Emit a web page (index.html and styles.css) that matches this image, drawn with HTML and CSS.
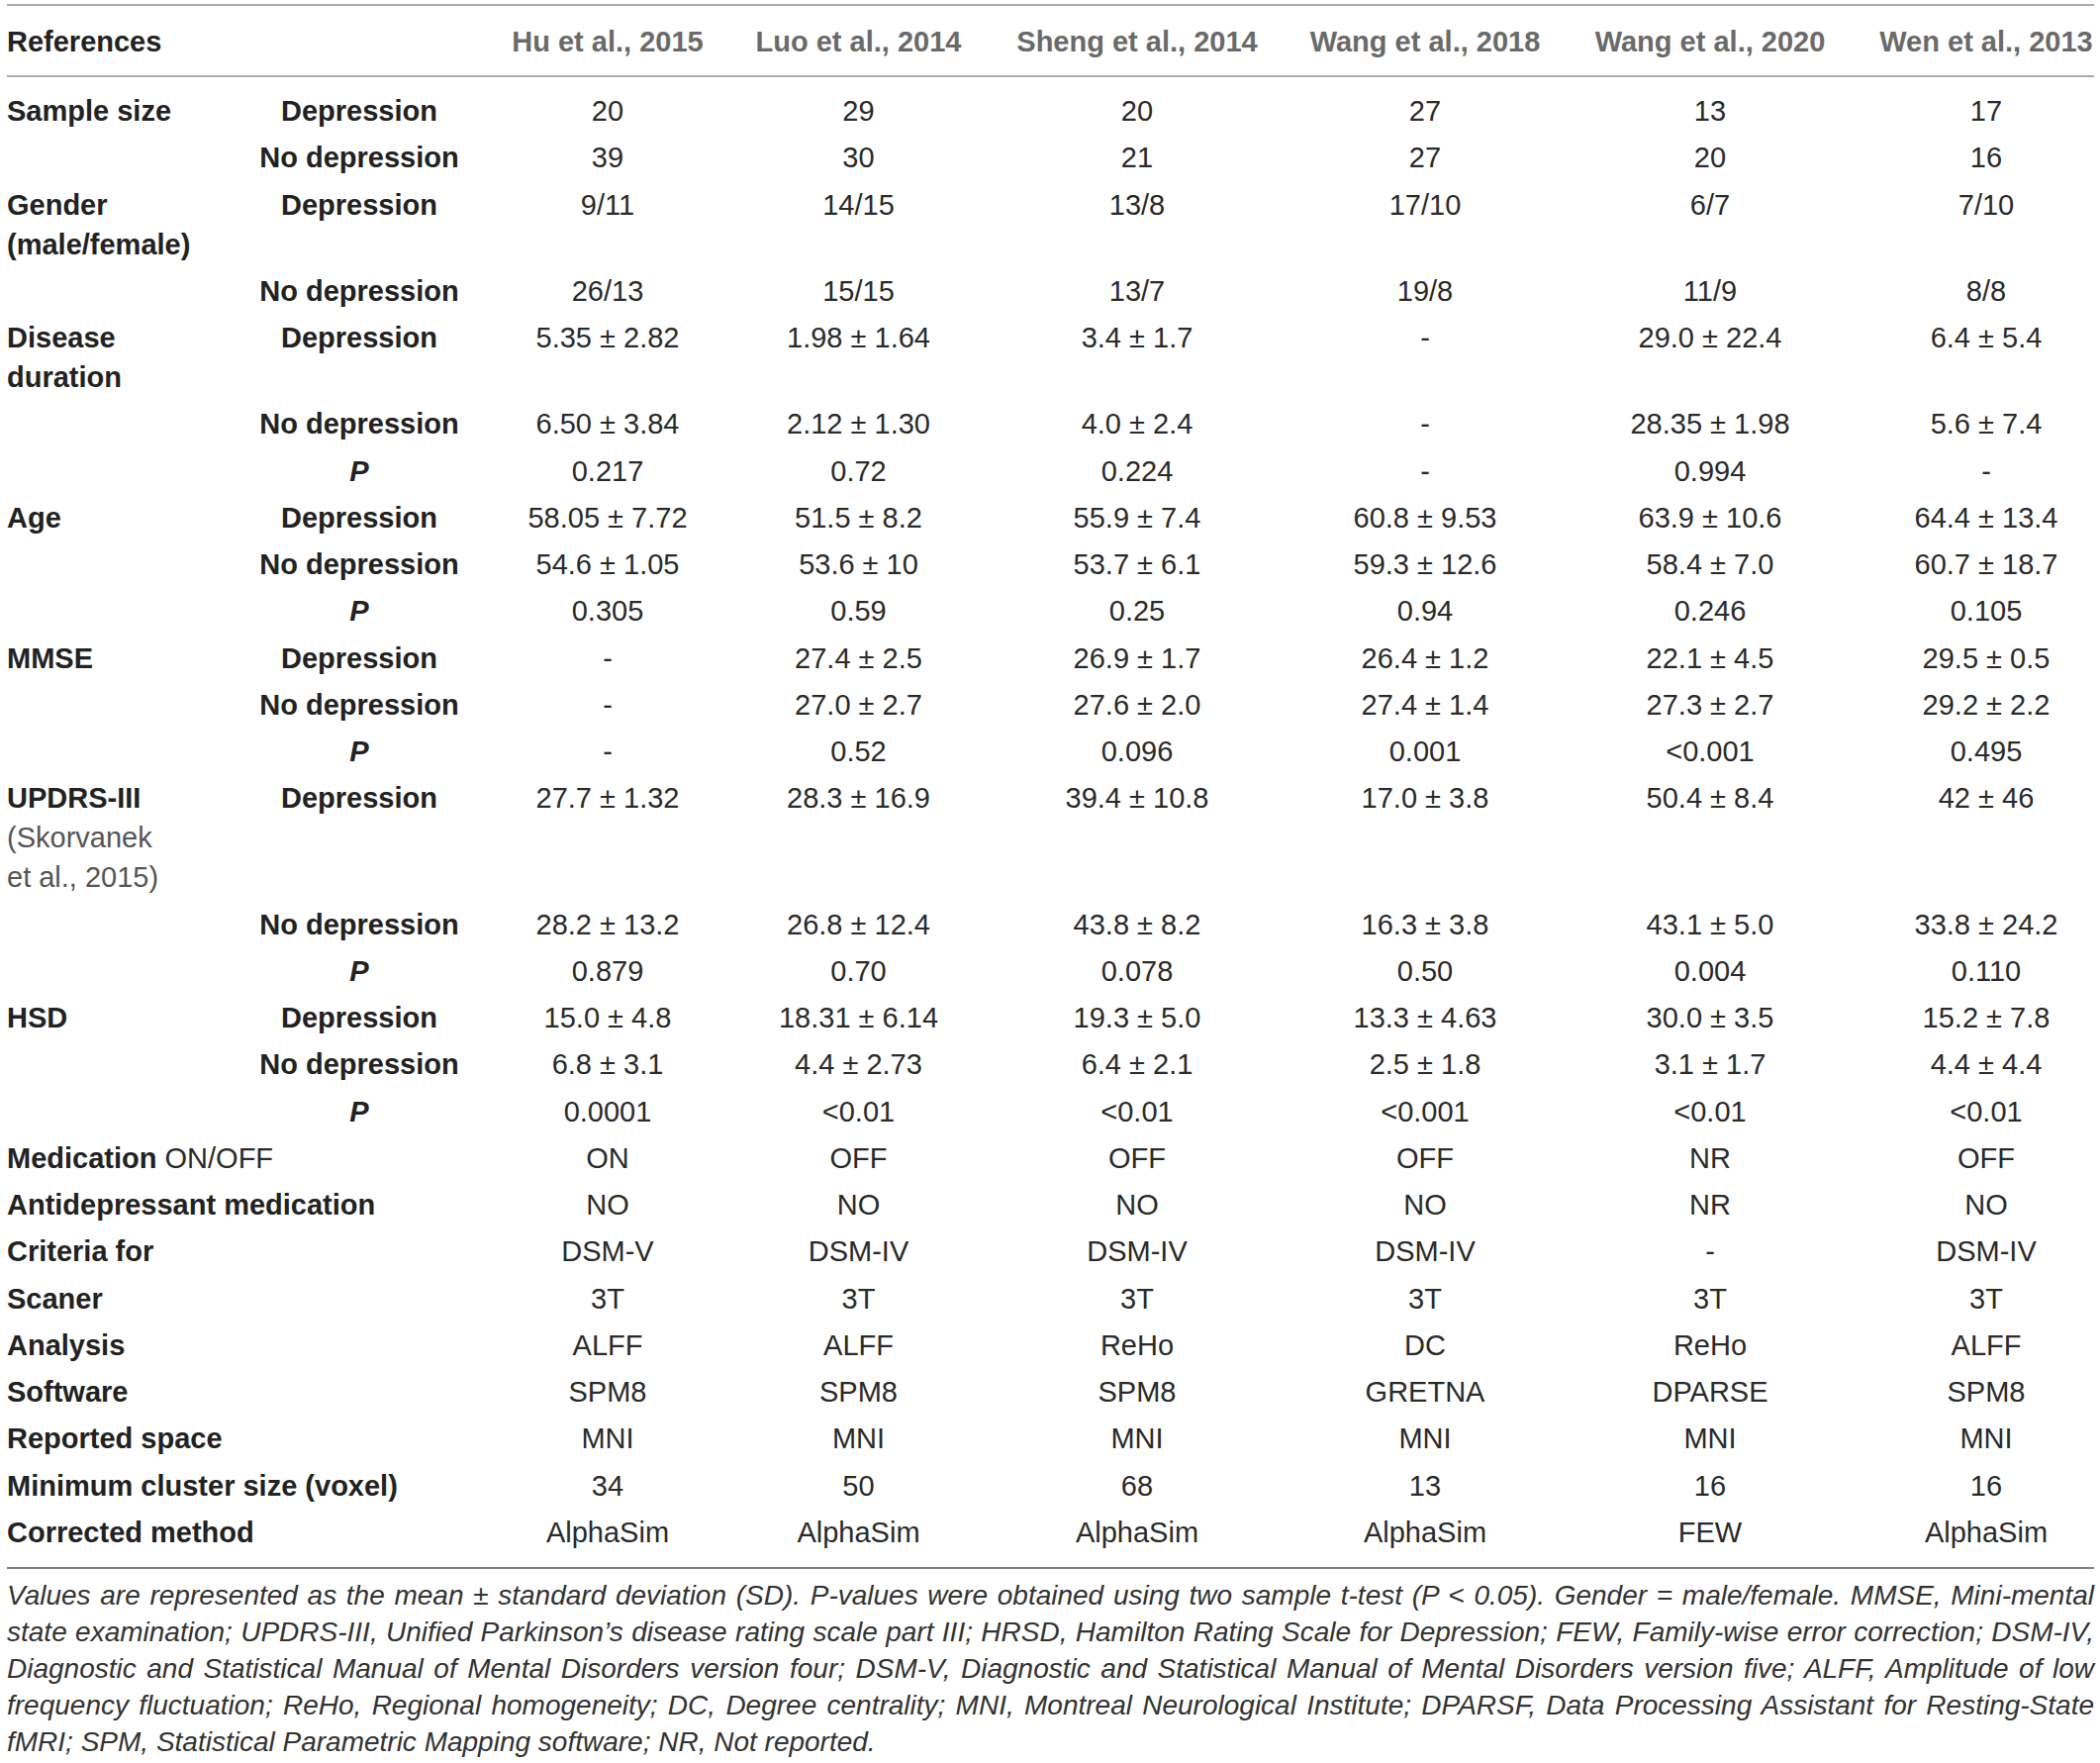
FILE: index.html
```html
<!DOCTYPE html>
<html lang="en">
<head>
<meta charset="UTF-8">
<meta name="viewport" content="width=device-width, initial-scale=1.0">
<title>Included studies</title>
<link rel="stylesheet" href="styles.css">
</head>
<body>

<div id="tableWrap">
  <table class="study-table">
    <colgroup>
      <col class="c-label">
      <col class="c-group">
      <col class="c-hu">
      <col class="c-luo">
      <col class="c-sheng">
      <col class="c-wang18">
      <col class="c-wang20">
      <col class="c-wen">
    </colgroup>
    <thead>
      <tr>
        <th class="lbl">References</th>
        <th></th>
        <th>Hu et al., 2015</th>
        <th>Luo et al., 2014</th>
        <th>Sheng et al., 2014</th>
        <th>Wang et al., 2018</th>
        <th>Wang et al., 2020</th>
        <th>Wen et al., 2013</th>
      </tr>
    </thead>
    <tbody>
      <tr>
        <td class="lbl">Sample size</td><td class="grp">Depression</td>
        <td>20</td><td>29</td><td>20</td><td>27</td><td>13</td><td>17</td>
      </tr>
      <tr>
        <td></td><td class="grp">No depression</td>
        <td>39</td><td>30</td><td>21</td><td>27</td><td>20</td><td>16</td>
      </tr>
      <tr>
        <td class="lbl">Gender (male/female)</td><td class="grp">Depression</td>
        <td>9/11</td><td>14/15</td><td>13/8</td><td>17/10</td><td>6/7</td><td>7/10</td>
      </tr>
      <tr>
        <td></td><td class="grp">No depression</td>
        <td>26/13</td><td>15/15</td><td>13/7</td><td>19/8</td><td>11/9</td><td>8/8</td>
      </tr>
      <tr>
        <td class="lbl">Disease duration</td><td class="grp">Depression</td>
        <td>5.35 ± 2.82</td><td>1.98 ± 1.64</td><td>3.4 ± 1.7</td><td>-</td><td>29.0 ± 22.4</td><td>6.4 ± 5.4</td>
      </tr>
      <tr>
        <td></td><td class="grp">No depression</td>
        <td>6.50 ± 3.84</td><td>2.12 ± 1.30</td><td>4.0 ± 2.4</td><td>-</td><td>28.35 ± 1.98</td><td>5.6 ± 7.4</td>
      </tr>
      <tr>
        <td></td><td class="grp pval">P</td>
        <td>0.217</td><td>0.72</td><td>0.224</td><td>-</td><td>0.994</td><td>-</td>
      </tr>
      <tr>
        <td class="lbl">Age</td><td class="grp">Depression</td>
        <td>58.05 ± 7.72</td><td>51.5 ± 8.2</td><td>55.9 ± 7.4</td><td>60.8 ± 9.53</td><td>63.9 ± 10.6</td><td>64.4 ± 13.4</td>
      </tr>
      <tr>
        <td></td><td class="grp">No depression</td>
        <td>54.6 ± 1.05</td><td>53.6 ± 10</td><td>53.7 ± 6.1</td><td>59.3 ± 12.6</td><td>58.4 ± 7.0</td><td>60.7 ± 18.7</td>
      </tr>
      <tr>
        <td></td><td class="grp pval">P</td>
        <td>0.305</td><td>0.59</td><td>0.25</td><td>0.94</td><td>0.246</td><td>0.105</td>
      </tr>
      <tr>
        <td class="lbl">MMSE</td><td class="grp">Depression</td>
        <td>-</td><td>27.4 ± 2.5</td><td>26.9 ± 1.7</td><td>26.4 ± 1.2</td><td>22.1 ± 4.5</td><td>29.5 ± 0.5</td>
      </tr>
      <tr>
        <td></td><td class="grp">No depression</td>
        <td>-</td><td>27.0 ± 2.7</td><td>27.6 ± 2.0</td><td>27.4 ± 1.4</td><td>27.3 ± 2.7</td><td>29.2 ± 2.2</td>
      </tr>
      <tr>
        <td></td><td class="grp pval">P</td>
        <td>-</td><td>0.52</td><td>0.096</td><td>0.001</td><td>&lt;0.001</td><td>0.495</td>
      </tr>
      <tr>
        <td class="lbl">UPDRS-III<br><span class="cite">(Skorvanek<br>et al., 2015)</span></td><td class="grp">Depression</td>
        <td>27.7 ± 1.32</td><td>28.3 ± 16.9</td><td>39.4 ± 10.8</td><td>17.0 ± 3.8</td><td>50.4 ± 8.4</td><td>42 ± 46</td>
      </tr>
      <tr>
        <td></td><td class="grp">No depression</td>
        <td>28.2 ± 13.2</td><td>26.8 ± 12.4</td><td>43.8 ± 8.2</td><td>16.3 ± 3.8</td><td>43.1 ± 5.0</td><td>33.8 ± 24.2</td>
      </tr>
      <tr>
        <td></td><td class="grp pval">P</td>
        <td>0.879</td><td>0.70</td><td>0.078</td><td>0.50</td><td>0.004</td><td>0.110</td>
      </tr>
      <tr>
        <td class="lbl">HSD</td><td class="grp">Depression</td>
        <td>15.0 ± 4.8</td><td>18.31 ± 6.14</td><td>19.3 ± 5.0</td><td>13.3 ± 4.63</td><td>30.0 ± 3.5</td><td>15.2 ± 7.8</td>
      </tr>
      <tr>
        <td></td><td class="grp">No depression</td>
        <td>6.8 ± 3.1</td><td>4.4 ± 2.73</td><td>6.4 ± 2.1</td><td>2.5 ± 1.8</td><td>3.1 ± 1.7</td><td>4.4 ± 4.4</td>
      </tr>
      <tr>
        <td></td><td class="grp pval">P</td>
        <td>0.0001</td><td>&lt;0.01</td><td>&lt;0.01</td><td>&lt;0.001</td><td>&lt;0.01</td><td>&lt;0.01</td>
      </tr>
      <tr>
        <td class="lbl" colspan="2">Medication <span class="cite">ON/OFF</span></td>
        <td>ON</td><td>OFF</td><td>OFF</td><td>OFF</td><td>NR</td><td>OFF</td>
      </tr>
      <tr>
        <td class="lbl" colspan="2">Antidepressant medication</td>
        <td>NO</td><td>NO</td><td>NO</td><td>NO</td><td>NR</td><td>NO</td>
      </tr>
      <tr>
        <td class="lbl" colspan="2">Criteria for</td>
        <td>DSM-V</td><td>DSM-IV</td><td>DSM-IV</td><td>DSM-IV</td><td>-</td><td>DSM-IV</td>
      </tr>
      <tr>
        <td class="lbl" colspan="2">Scaner</td>
        <td>3T</td><td>3T</td><td>3T</td><td>3T</td><td>3T</td><td>3T</td>
      </tr>
      <tr>
        <td class="lbl" colspan="2">Analysis</td>
        <td>ALFF</td><td>ALFF</td><td>ReHo</td><td>DC</td><td>ReHo</td><td>ALFF</td>
      </tr>
      <tr>
        <td class="lbl" colspan="2">Software</td>
        <td>SPM8</td><td>SPM8</td><td>SPM8</td><td>GRETNA</td><td>DPARSE</td><td>SPM8</td>
      </tr>
      <tr>
        <td class="lbl" colspan="2">Reported space</td>
        <td>MNI</td><td>MNI</td><td>MNI</td><td>MNI</td><td>MNI</td><td>MNI</td>
      </tr>
      <tr>
        <td class="lbl" colspan="2">Minimum cluster size (voxel)</td>
        <td>34</td><td>50</td><td>68</td><td>13</td><td>16</td><td>16</td>
      </tr>
      <tr>
        <td class="lbl" colspan="2">Corrected method</td>
        <td>AlphaSim</td><td>AlphaSim</td><td>AlphaSim</td><td>AlphaSim</td><td>FEW</td><td>AlphaSim</td>
      </tr>
    </tbody>
  </table>

  <p class="table-note">Values are represented as the mean ± standard deviation (SD). P-values were obtained using two sample t-test (P &lt; 0.05). Gender = male/female. MMSE, Mini-mental state examination; UPDRS-III, Unified Parkinson’s disease rating scale part III; HRSD, Hamilton Rating Scale for Depression; FEW, Family-wise error correction; DSM-IV, Diagnostic and Statistical Manual of Mental Disorders version four; DSM-V, Diagnostic and Statistical Manual of Mental Disorders version five; ALFF, Amplitude of low frequency fluctuation; ReHo, Regional homogeneity; DC, Degree centrality; MNI, Montreal Neurological Institute; DPARSF, Data Processing Assistant for Resting-State fMRI; SPM, Statistical Parametric Mapping software; NR, Not reported.</p>
</div>

</body>
</html>
```

FILE: styles.css
```css
body {
  font-family: "Liberation Sans", Arial, sans-serif;
  background-color: #fff;
  color: #222;
  margin: 0;
  padding: 0;
}

#tableWrap {
  width: 2109px;
  margin-left: 7px;
  padding-top: 4px;
}

.study-table {
  width: 2109px;
  border-collapse: collapse;
  table-layout: fixed;
  font-size: 29px;
  line-height: 40px;
}

.c-label { width: 250px; }
.c-group { width: 212px; }
.c-hu { width: 290px; }
.c-luo { width: 217px; }
.c-sheng { width: 346px; }
.c-wang18 { width: 236px; }
.c-wang20 { width: 340px; }
.c-wen { width: 218px; }

thead tr {
  border-top: 2px solid #ababab;
  border-bottom: 2px solid #ababab;
}

th {
  padding: 16px 0 14px;
  font-weight: bold;
  color: #6a6a6a;
  text-align: center;
  white-space: nowrap;
}

th.lbl {
  color: #222;
  text-align: left;
}

td {
  padding: 3.63px 0;
  text-align: center;
  vertical-align: top;
  color: #2a2a2a;
  white-space: nowrap;
}

tbody tr:first-child td {
  padding-top: 14px;
}

tbody tr:last-child td {
  padding-bottom: 15px;
}

tbody tr:last-child {
  border-bottom: 2px solid #808080;
}

td.lbl {
  text-align: left;
  font-weight: bold;
  color: #222;
  white-space: normal;
  padding-right: 40px;
}

td.lbl[colspan] {
  white-space: nowrap;
}

td.grp {
  font-weight: bold;
  color: #222;
}

td.pval {
  font-style: italic;
}

.cite {
  font-weight: normal;
  color: #555;
}

td.lbl[colspan] .cite {
  color: #2a2a2a;
}

.table-note {
  margin: 0;
  padding-top: 8px;
  font-size: 28px;
  line-height: 37px;
  font-style: italic;
  color: #333;
  text-align: justify;
}
```
